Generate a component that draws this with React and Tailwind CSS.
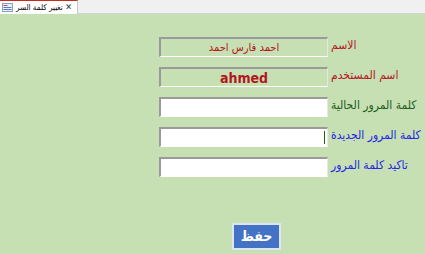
import React from 'react'

const font = { fontFamily: '"DejaVu Sans Condensed", "DejaVu Sans", Tahoma, sans-serif' }

const rows = [
  { label: 'الاسم', color: 'text-[#b4161e]', value: 'احمد فارس احمد', readOnly: true },
  { label: 'اسم المستخدم', color: 'text-[#b4161e]', value: 'ahmed', readOnly: true, bold: true },
  { label: 'كلمة المرور الحالية', color: 'text-[#1e5c1e]' },
  { label: 'كلمة المرور الجديدة', color: 'text-[#1f1fe6]', caret: true },
  { label: ' تاكيد كلمة المرور', color: 'text-[#1f1fe6]' },
]

const App = () => {
  return (
    <div className="w-[425px] h-[254px] flex flex-col bg-[#c6e0b4] overflow-hidden" style={font}>
      {/* tab bar */}
      <div className="h-[14px] flex bg-[#f0f0f0] border-b border-[#d4d4d4]">
        <div className="w-[78px] h-[14px] flex items-center bg-white border-t border-[#c42b1c] border-r border-r-[#c8c8c8]">
          <svg width="11" height="9" viewBox="0 0 11 9" className="ml-[2px] shrink-0">
            <rect x="0.5" y="0.5" width="10" height="8" fill="#e8eef8" stroke="#8aa0c8" />
            <rect x="1.5" y="2" width="4" height="1" fill="#c0504d" />
            <rect x="1.5" y="4" width="8" height="1" fill="#5a7fbf" />
            <rect x="1.5" y="6" width="8" height="1" fill="#5a7fbf" />
          </svg>
          <span dir="rtl" className="ml-[3px] text-[8px] leading-none text-black whitespace-nowrap">تغيير كلمة السر</span>
          <span className="ml-auto mr-[5px] text-[9px] leading-none text-[#333]">✕</span>
        </div>
      </div>

      {/* form */}
      <div className="flex flex-col gap-[10px] pt-[23px] pl-[159px]">
        {rows.map((r, i) => (
          <div key={i} className="flex items-center h-[20px]">
            <div
              className={`relative w-[169px] h-[20px] flex items-center justify-center border-t-2 border-l-2 border-[#9a9a9a] border-b border-r border-b-white border-r-[#e6e6e6] ${r.readOnly ? 'bg-[#c6e0b4]' : 'bg-white'}`}
            >
              {r.value && (
                <span
                  dir="rtl"
                  className={`text-[#b4161e] leading-none ${r.bold ? 'text-[14px] font-bold' : 'text-[11px]'}`}
                >
                  {r.value}
                </span>
              )}
              {r.caret && <span className="absolute right-[2px] top-[2px] w-px h-[13px] bg-[#1e5c1e]"></span>}
            </div>
            <span dir="rtl" className={`ml-[3px] -mt-[4px] text-[12px] leading-none whitespace-pre ${r.color}`}>
              {r.label}
            </span>
          </div>
        ))}
      </div>

      <div className="pl-[232px] pt-[46px]">
        <button className="w-[49px] h-[27px] flex items-center justify-center bg-[#4472c4] border-2 border-[#dce6f2] text-white text-[14px] font-bold">
          حفظ
        </button>
      </div>
    </div>
  )
}

export default App
